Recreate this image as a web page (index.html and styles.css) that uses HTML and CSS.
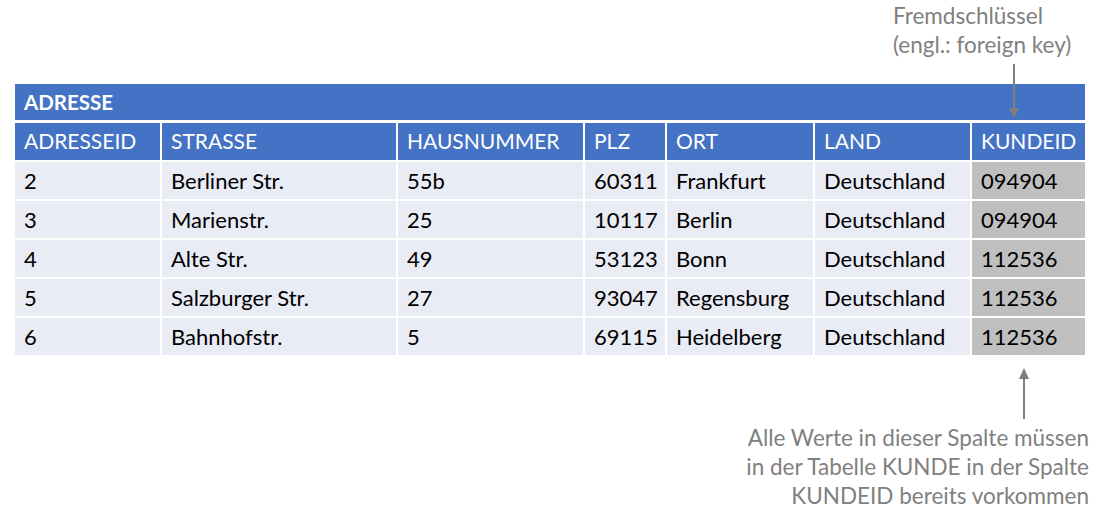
FILE: index.html
```html
<!DOCTYPE html>
<html lang="de">
<head>
<meta charset="utf-8">
<title>ADRESSE</title>
<link rel="stylesheet" href="styles.css">
</head>
<body>
<div class="page">
  <div class="fk-note">
    <div>Fremdschlüssel</div>
    <div>(engl.: foreign key)</div>
  </div>
  <svg class="arrow-down" width="12" height="56" viewBox="0 0 12 56">
    <line x1="6" y1="0" x2="6" y2="46" stroke="#7f7f7f" stroke-width="2"/>
    <polygon points="1,44 11,44 6,54" fill="#7f7f7f"/>
  </svg>

  <div class="table">
    <div class="title">ADRESSE</div>
    <div class="grid">
      <div class="th">ADRESSEID</div>
      <div class="th">STRASSE</div>
      <div class="th">HAUSNUMMER</div>
      <div class="th">PLZ</div>
      <div class="th">ORT</div>
      <div class="th">LAND</div>
      <div class="th">KUNDEID</div>

      <div class="td">2</div><div class="td">Berliner Str.</div><div class="td">55b</div><div class="td">60311</div><div class="td">Frankfurt</div><div class="td">Deutschland</div><div class="td fk">094904</div>
      <div class="td">3</div><div class="td">Marienstr.</div><div class="td">25</div><div class="td">10117</div><div class="td">Berlin</div><div class="td">Deutschland</div><div class="td fk">094904</div>
      <div class="td">4</div><div class="td">Alte Str.</div><div class="td">49</div><div class="td">53123</div><div class="td">Bonn</div><div class="td">Deutschland</div><div class="td fk">112536</div>
      <div class="td">5</div><div class="td">Salzburger Str.</div><div class="td">27</div><div class="td">93047</div><div class="td">Regensburg</div><div class="td">Deutschland</div><div class="td fk">112536</div>
      <div class="td">6</div><div class="td">Bahnhofstr.</div><div class="td">5</div><div class="td">69115</div><div class="td">Heidelberg</div><div class="td">Deutschland</div><div class="td fk">112536</div>
    </div>
  </div>

  <div class="bottom">
    <div class="arrow-up-wrap">
      <svg class="arrow-up" width="12" height="52" viewBox="0 0 12 52">
        <polygon points="1,12 11,12 6,1" fill="#7f7f7f"/>
        <line x1="6" y1="10" x2="6" y2="52" stroke="#7f7f7f" stroke-width="2"/>
      </svg>
    </div>
    <div class="bottom-note">
      <div>Alle Werte in dieser Spalte müssen</div>
      <div>in der Tabelle KUNDE in der Spalte</div>
      <div>KUNDEID bereits vorkommen</div>
    </div>
  </div>
</div>
</body>
</html>
```

FILE: styles.css
```css
html, body {
  margin: 0;
  padding: 0;
  background: #ffffff;
}

.page {
  position: relative;
  width: 1104px;
  height: 513px;
  overflow: hidden;
  font-family: Lato, "Open Sans", "Liberation Sans", sans-serif;
  font-size: 22px;
  color: #000;
}

.fk-note {
  margin-left: 893px;
  padding-top: 1px;
  height: 82px;
  box-sizing: border-box;
  color: #808080;
  line-height: 29px;
  font-size: 22.5px;
}

.arrow-down {
  position: absolute;
  left: 1008px;
  top: 64px;
}

.table {
  margin-left: 15px;
  width: 1070px;
  margin-top: 2px;
}

.title {
  height: 36px;
  background: #4472c4;
  color: #fff;
  font-weight: 700;
  font-size: 20.5px;
  padding-left: 9px;
  display: flex;
  align-items: center;
  margin-bottom: 3px;
}

.grid {
  display: grid;
  grid-template-columns: 145px 234px 185px 80px 146px 155px 113px;
  grid-auto-rows: 37px;
  column-gap: 2px;
  row-gap: 2px;
}

.th, .td {
  display: flex;
  align-items: center;
  padding-left: 9px;
  white-space: nowrap;
}

.th {
  background: #4472c4;
  color: #fff;
  font-size: 21px;
  padding-bottom: 2px;
}

.td {
  background: #e9ebf5;
  padding-bottom: 1px;
}

.td.fk {
  background: #bfbfbf;
}

.bottom {
  padding-top: 12px;
}

.arrow-up-wrap {
  margin-left: 1018px;
  height: 52px;
}

.arrow-up {
  display: block;
}

.bottom-note {
  margin-top: 4px;
  width: 1089px;
  text-align: right;
  color: #808080;
  line-height: 29px;
  font-size: 22.5px;
}
```
